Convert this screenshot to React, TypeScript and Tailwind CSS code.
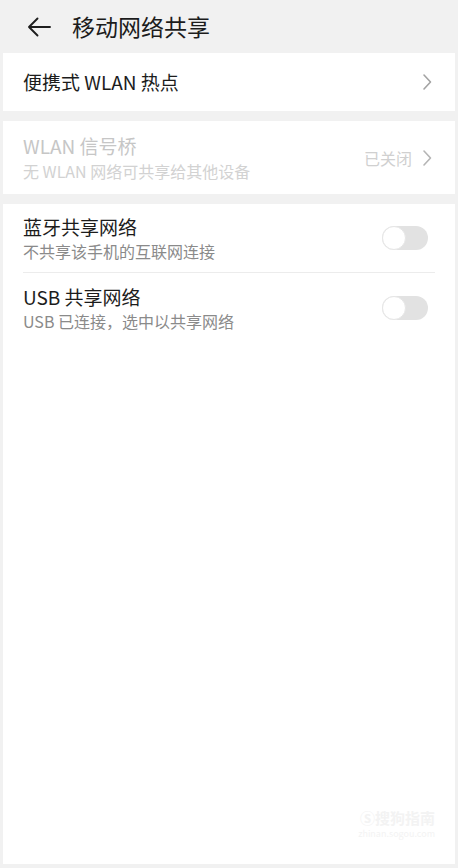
import React, { useState } from "react";

const FONT = { fontFamily: '"Noto Sans CJK SC", "Noto Sans", Roboto, sans-serif' };

function Chevron({ color }: { color: string }) {
  return (
    <svg width="10" height="18" viewBox="0 0 10 18" fill="none">
      <path d="M2 2l6.5 7L2 16" stroke={color} strokeWidth="1.6" strokeLinecap="round" strokeLinejoin="round" />
    </svg>
  );
}

function Toggle({ on, onClick }: { on: boolean; onClick: () => void }) {
  return (
    <button
      type="button"
      onClick={onClick}
      className={`relative h-[24px] w-[46px] shrink-0 rounded-full ${on ? "bg-[#256fff]" : "bg-[#e2e2e2]"}`}
    >
      <span
        className={`absolute top-0 h-[24px] w-[24px] rounded-full border border-[#e6e6e6] bg-white ${on ? "left-[22px]" : "left-0"}`}
      />
    </button>
  );
}

export default function App() {
  const [bt, setBt] = useState(false);
  const [usb, setUsb] = useState(false);

  return (
    <div className="relative flex h-[868px] w-[458px] flex-col bg-[#f1f1f1] px-[3px] pb-[4px]" style={FONT}>
      {/* Title bar */}
      <div className="flex h-[53px] items-center">
        <button type="button" className="ml-[22px] flex h-[28px] w-[28px] items-center justify-center">
          <svg width="26" height="22" viewBox="0 0 26 22" fill="none">
            <path d="M24 11H3M11.5 2.5L3 11l8.5 8.5" stroke="#1e1e1e" strokeWidth="1.9" strokeLinecap="round" strokeLinejoin="round" />
          </svg>
        </button>
        <span className="ml-[19px] text-[23px] leading-none text-[#1c1c1c]">移动网络共享</span>
      </div>

      {/* Hotspot */}
      <div className="flex h-[58px] items-center justify-between bg-white pl-[20px] pr-[23px]">
        <span className="text-[19px] text-[#1c1c1c]">便携式 WLAN 热点</span>
        <Chevron color="#a3a3a3" />
      </div>

      {/* WLAN bridge (disabled) */}
      <div className="mt-[10px] flex h-[73px] items-center justify-between bg-white pl-[20px] pr-[23px]">
        <div className="flex flex-col">
          <span className="text-[19px] leading-[24px] text-[#c6c6c6]">WLAN 信号桥</span>
          <span className="mt-[2px] text-[16px] leading-[22px] text-[#d2d2d2]">无 WLAN 网络可共享给其他设备</span>
        </div>
        <div className="flex items-center gap-[10px]">
          <span className="text-[16px] text-[#d0d0d0]">已关闭</span>
          <Chevron color="#b5b5b5" />
        </div>
      </div>

      {/* Sharing toggles */}
      <div className="relative mt-[10px] flex-1 bg-white pl-[20px] pr-[20px]">
        <div className="flex h-[69px] items-center justify-between border-b border-[#ececec] pr-[7px]">
          <div className="flex flex-col">
            <span className="text-[19px] leading-[24px] text-[#1c1c1c]">蓝牙共享网络</span>
            <span className="mt-[1px] text-[16px] leading-[22px] text-[#8a8a8a]">不共享该手机的互联网连接</span>
          </div>
          <Toggle on={bt} onClick={() => setBt(!bt)} />
        </div>
        <div className="flex h-[70px] items-center justify-between pr-[7px]">
          <div className="flex flex-col">
            <span className="text-[19px] leading-[24px] text-[#1c1c1c]">USB 共享网络</span>
            <span className="mt-[1px] text-[16px] leading-[22px] text-[#8a8a8a]">USB 已连接，选中以共享网络</span>
          </div>
          <Toggle on={usb} onClick={() => setUsb(!usb)} />
        </div>

        {/* faint watermark */}
        <div className="absolute bottom-[24px] right-[20px] flex flex-col items-end text-[#f3f3f3]">
          <span className="text-[15px] font-bold leading-[20px]">Ⓢ搜狗指南</span>
          <span className="text-[9px] leading-[12px]">zhinan.sogou.com</span>
        </div>
      </div>
    </div>
  );
}
